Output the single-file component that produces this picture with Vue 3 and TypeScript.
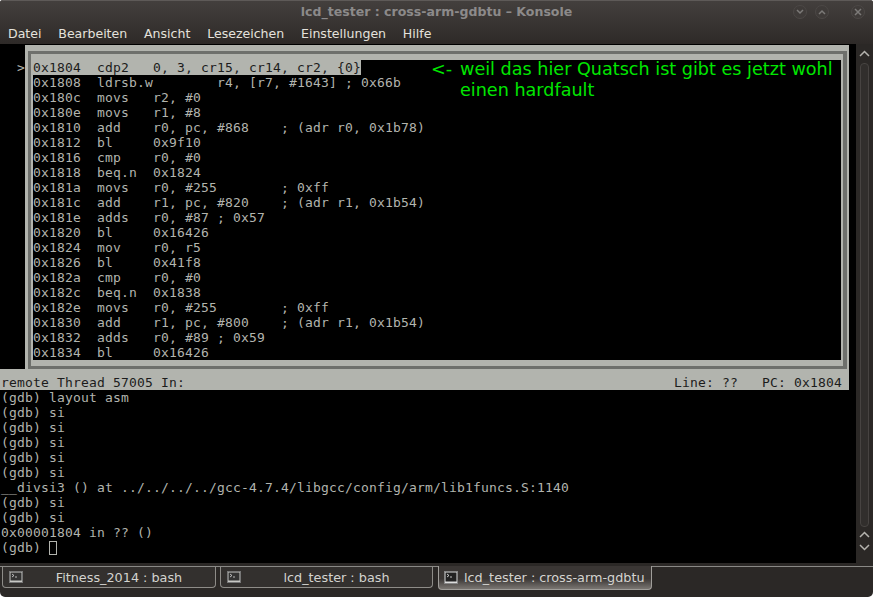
<script setup lang="ts">
const first = '0x1804  cdp2   0, 3, cr15, cr14, cr2, {0}'
const asm: string[] = [
  '0x1808  ldrsb.w        r4, [r7, #1643] ; 0x66b',
  '0x180c  movs   r2, #0',
  '0x180e  movs   r1, #8',
  '0x1810  add    r0, pc, #868    ; (adr r0, 0x1b78)',
  '0x1812  bl     0x9f10',
  '0x1816  cmp    r0, #0',
  '0x1818  beq.n  0x1824',
  '0x181a  movs   r0, #255        ; 0xff',
  '0x181c  add    r1, pc, #820    ; (adr r1, 0x1b54)',
  '0x181e  adds   r0, #87 ; 0x57',
  '0x1820  bl     0x16426',
  '0x1824  mov    r0, r5',
  '0x1826  bl     0x41f8',
  '0x182a  cmp    r0, #0',
  '0x182c  beq.n  0x1838',
  '0x182e  movs   r0, #255        ; 0xff',
  '0x1830  add    r1, pc, #800    ; (adr r1, 0x1b54)',
  '0x1832  adds   r0, #89 ; 0x59',
  '0x1834  bl     0x16426',
]
const cmd: string[] = [
  '(gdb) layout asm',
  '(gdb) si',
  '(gdb) si',
  '(gdb) si',
  '(gdb) si',
  '(gdb) si',
  '__divsi3 () at ../../../../gcc-4.7.4/libgcc/config/arm/lib1funcs.S:1140',
  '(gdb) si',
  '(gdb) si',
  '0x00001804 in ?? ()',
]
const menu: string[] = ['Datei', 'Bearbeiten', 'Ansicht', 'Lesezeichen', 'Einstellungen', 'Hilfe']
const statusRight = 'Line: ??   PC: 0x1804'
</script>

<template>
  <div class="win">
    <div class="title">
      <span class="title-text">lcd_tester : cross-arm-gdbtu – Konsole</span>
      <div class="wbtns">
        <span class="wbtn"><svg width="8" height="6" viewBox="0 0 8 6"><path d="M1 1l3 3 3-3" /></svg></span>
        <span class="wbtn"><svg width="8" height="6" viewBox="0 0 8 6"><path d="M1 5l3-3 3 3" /></svg></span>
        <span class="wbtn close"><svg width="8" height="8" viewBox="0 0 8 8"><path d="M1 1l6 6M7 1l-6 6" /></svg></span>
      </div>
    </div>
    <div class="menu"><span v-for="m in menu" :key="m">{{ m }}</span></div>
    <div class="mid">
      <div class="term">
        <div class="top">
          <span class="marker">&gt;</span>
          <div class="box">
            <div class="inner">
              <div class="code">
                <div class="line"><span class="hl">{{ first }}</span></div>
                <div v-for="l in asm" :key="l" class="line">{{ l }}</div>
                <div class="note">
                  <div class="note-l"><span class="arrow">&lt;-</span>weil das hier Quatsch ist gibt es jetzt wohl</div>
                  <div class="note-l indent">einen hardfault</div>
                </div>
              </div>
            </div>
          </div>
        </div>
        <div class="status"><span>remote Thread 57005 In:</span><span>{{ statusRight }}</span></div>
        <div class="cmd">
          <div v-for="(l, i) in cmd" :key="i" class="line">{{ l }}</div>
          <div class="line">(gdb) <span class="cursor"></span></div>
        </div>
      </div>
      <div class="sb">
        <svg class="arr" width="11" height="7" viewBox="0 0 11 7"><path d="M1 6l4.5-4.5L10 6" /></svg>
        <div class="track"></div>
        <svg class="arr" width="11" height="7" viewBox="0 0 11 7"><path d="M1 6l4.5-4.5L10 6" /></svg>
        <svg class="arr" width="11" height="7" viewBox="0 0 11 7"><path d="M1 1l4.5 4.5L10 1" /></svg>
      </div>
    </div>
    <div class="tabs">
      <div class="tabrow">
        <div class="tab t1">
          <svg class="ico" width="14" height="12" viewBox="0 0 14 12"><rect x=".5" y=".5" width="13" height="11" fill="#c8c8c4" stroke="#777" /><rect x="1.5" y="1.5" width="11" height="8" fill="#333" /><path d="M3 3l2 1.5-2 1.5M6 6h2" stroke="#ddd" fill="none" stroke-width=".8" /></svg>
          <span class="tab-text">Fitness_2014 : bash</span>
        </div>
        <div class="tab t2">
          <svg class="ico" width="14" height="12" viewBox="0 0 14 12"><rect x=".5" y=".5" width="13" height="11" fill="#c8c8c4" stroke="#777" /><rect x="1.5" y="1.5" width="11" height="8" fill="#333" /><path d="M3 3l2 1.5-2 1.5M6 6h2" stroke="#ddd" fill="none" stroke-width=".8" /></svg>
          <span class="tab-text">lcd_tester : bash</span>
        </div>
        <div class="tab active">
          <svg class="ico" width="14" height="13" viewBox="0 0 14 13"><rect x=".5" y=".5" width="13" height="12" fill="#ddd" stroke="#888" /><rect x="1.5" y="1.5" width="11" height="9" fill="#222" /><path d="M3 3l2 1.5-2 1.5M6 6h2" stroke="#eee" fill="none" stroke-width=".8" /></svg>
          <span>lcd_tester : cross-arm-gdbtu</span>
        </div>
      </div>
    </div>
  </div>
</template>

<style scoped>
.win {
  width: 873px;
  height: 597px;
  background: #2b2826;
  display: flex;
  flex-direction: column;
  overflow: hidden;
  border-radius: 3px 3px 5px 5px;
  font-family: "DejaVu Sans", sans-serif;
  color: #e4e2dc;
}
.title {
  height: 22px;
  flex: none;
  display: flex;
  align-items: center;
  justify-content: center;
  position: relative;
  background: linear-gradient(#433f3d, #393533);
  border-top: 1px solid #5e5a58;
  box-sizing: border-box;
}
.title-text {
  font-size: 12.55px;
  font-weight: 700;
  color: #8c8a8a;
}
.wbtns {
  position: absolute;
  right: 8px;
  top: 4px;
  display: flex;
  gap: 8px;
}
.wbtn {
  width: 14px;
  height: 14px;
  box-sizing: border-box;
  border-radius: 50%;
  background: #3f3b39;
  border: 1px solid #4c4846;
  display: flex;
  align-items: center;
  justify-content: center;
}
.wbtn.close { margin-left: 14px; }
.wbtn path { stroke: #7c7a78; stroke-width: 1.5; fill: none; }
.menu {
  height: 22px;
  flex: none;
  display: flex;
  align-items: center;
  gap: 16.8px;
  padding-left: 8px;
  font-size: 12.55px;
  background: linear-gradient(#393533, #2e2a28);
}
.mid {
  height: 519px;
  flex: none;
  display: flex;
}
.term {
  width: 856px;
  background: #000;
  display: flex;
  flex-direction: column;
  font-family: "DejaVu Sans Mono", monospace;
  font-size: 13px;
  letter-spacing: 0.174px;
  line-height: 15px;
  color: #b2b4ae;
}
.line {
  height: 15px;
  white-space: pre;
}
.top {
  display: flex;
  height: 325px;
  flex: none;
}
.marker {
  width: 25px;
  flex: none;
  padding-top: 16px;
  box-sizing: border-box;
  text-align: right;
  line-height: 15px;
}
.box {
  width: 824px;
  margin-top: 1px;
  background: #b2b4ae;
  padding-top: 6px;
  box-sizing: border-box;
  flex: none;
}
.inner {
  margin: 0 2px 0 3px;
  height: 318px;
  border: 3px solid #6e706c;
  border-right-width: 4px;
  padding: 6px 2px;
  box-sizing: border-box;
  display: flex;
}
.code {
  flex: 1;
  background: #000;
  position: relative;
}
.hl {
  background: #b2b4ae;
  color: #1c1c1c;
  display: inline-block;
}
.note {
  position: absolute;
  left: 398px;
  top: -1px;
  font-family: "DejaVu Sans", sans-serif;
  font-size: 17.6px;
  letter-spacing: 0;
  line-height: 21px;
  color: #00e600;
  white-space: pre;
}
.note-l { height: 21px; }
.arrow { display: inline-block; width: 29px; }
.indent { padding-left: 29px; }
.status {
  height: 21px;
  width: 849px;
  background: #b2b4ae;
  color: #1c1c1c;
  display: flex;
  justify-content: space-between;
  padding: 6px 7px 0 1px;
  box-sizing: border-box;
  flex: none;
  white-space: pre;
}
.cmd {
  padding-left: 1px;
}
.cursor {
  display: inline-block;
  width: 8px;
  height: 14px;
  border: 1px solid #b2b4ae;
  box-sizing: border-box;
  vertical-align: -3px;
}
.sb {
  width: 17px;
  flex: none;
  display: flex;
  flex-direction: column;
  align-items: center;
  padding: 6px 0 6px;
  box-sizing: border-box;
}
.sb path { stroke: #b5b3ae; stroke-width: 1.5; fill: none; }
.arr { flex: none; margin-bottom: 6px; }
.track {
  flex: 1;
  width: 9px;
  margin-bottom: 4px;
  box-sizing: border-box;
  border: 1px solid #474341;
  border-radius: 4px;
  background: #312e2c;
}
.tabs {
  height: 34px;
  flex: none;
  padding-top: 3px;
  box-sizing: border-box;
}
.tabrow {
  display: flex;
  padding-left: 2px;
  border-top: 1px solid #8a8986;
  font-size: 12.8px;
  color: #d4d4d0;
}
.tab {
  height: 21px;
  box-sizing: border-box;
  border: 1px solid #8e8c88;
  border-top: none;
  border-radius: 0 0 4px 4px;
  display: flex;
  align-items: center;
  padding-left: 6px;
  background: #33302e;
}
.t1 { width: 214px; margin-right: 4px; }
.t2 { width: 213px; margin-right: 5px; }
.tab-text { flex: 1; text-align: center; padding-right: 6px; }
.ico { flex: none; margin-right: 6px; }
.active {
  margin-top: -1px;
  height: 24px;
  width: 214px;
  padding-left: 5px;
  background: linear-gradient(#3a3634 55%, #7a7672);
  border-color: #a09e9a;
}
</style>

<style>
html, body { margin: 0; background: #fff; }
</style>
